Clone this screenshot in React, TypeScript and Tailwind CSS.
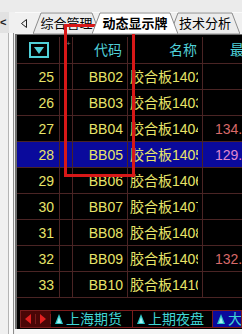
import React from "react"

type Row = { n: number; code: string; name: string; price?: string; active?: boolean }

const rows: Row[] = [
  { n: 25, code: "BB02", name: "胶合板1402" },
  { n: 26, code: "BB03", name: "胶合板1403" },
  { n: 27, code: "BB04", name: "胶合板1404", price: "134.5" },
  { n: 28, code: "BB05", name: "胶合板1405", price: "129.0", active: true },
  { n: 29, code: "BB06", name: "胶合板1406" },
  { n: 30, code: "BB07", name: "胶合板1407" },
  { n: 31, code: "BB08", name: "胶合板1408" },
  { n: 32, code: "BB09", name: "胶合板1409", price: "132.0" },
  { n: 33, code: "BB10", name: "胶合板1410" },
]

const font = { fontFamily: '"Liberation Sans", "Noto Sans CJK SC", sans-serif' }

function Tab({ label, width, active, first }: { label: string; width: number; active?: boolean; first?: boolean }) {
  return (
    <div
      className={`relative flex h-[22px] shrink-0 items-center justify-center ${first ? "" : "-ml-[8px]"} ${active ? "z-10 font-bold" : "z-0"}`}
      style={{ width }}
    >
      <svg className="absolute inset-0" width={width} height={22}>
        <polygon
          points={`0,22 8,1 ${width - 8},1 ${width},22`}
          fill={active ? "#ffffff" : "#ececec"}
          stroke="#8c8c8c"
          strokeWidth={1}
        />
      </svg>
      <span className="relative text-[13px] leading-none text-black">{label}</span>
    </div>
  )
}

function UpTri() {
  return (
    <svg width="8" height="10" viewBox="0 0 8 10" className="shrink-0">
      <polygon points="4,0 8,10 0,10" fill="#30c8c8" />
      <polygon points="4,3 6,9 2,9" fill="#a8f0f0" />
    </svg>
  )
}

export default function App() {
  return (
    <div className="relative flex h-[334px] w-[242px] flex-col overflow-hidden bg-[#f0f0f0]" style={font}>
      <div className="h-[12px] shrink-0 bg-[#ebebeb]" />
      <div className="flex min-h-0 flex-1">
        {/* left strip */}
        <div className="flex w-[15px] shrink-0 flex-col">
          <div className="flex h-[21px] w-[9px] items-center justify-start bg-[#e2e2e2] text-[11px] font-bold leading-none text-[#202020]">
            &lt;
          </div>
          <div className="flex flex-1">
            <div className="w-[9px] border-r border-[#b4b4b4]" />
            <div className="w-[4px] bg-[#fafafa]" />
            <div className="w-[1px] bg-[#8c8c8c]" />
          </div>
        </div>

        {/* main */}
        <div className="flex min-w-0 flex-1 flex-col">
          {/* sheet tabs */}
          <div className="flex h-[22px] shrink-0 items-end border-t border-[#fafafa]">
            <div className="flex h-[22px] w-[18px] shrink-0 items-center justify-center">
              <svg width="6" height="9" viewBox="0 0 6 9">
                <polygon points="5.5,0.5 5.5,8.5 0.5,4.5" fill="none" stroke="#202020" strokeWidth={1} />
              </svg>
            </div>
            <Tab label="综合管理" width={67} first />
            <Tab label="动态显示牌" width={86} active />
            <Tab label="技术分析" width={70} />
          </div>

          {/* black panel */}
          <div className="flex h-[295px] shrink-0 flex-col border-l-2 border-t border-[#6e6e6e] bg-black">
            <div className="flex-1 overflow-hidden whitespace-nowrap text-[14px] leading-none">
              {/* header */}
              <div className="flex h-[29px] border-b border-[#4a2424] pt-[2px] text-[#50d0d8]">
                <div className="flex w-[43px] shrink-0 items-center justify-center border-r border-[#4a2424] pl-[1px]">
                  <div className="flex h-[16px] w-[20px] items-center justify-center border-2 border-[#50d0d8]">
                    <svg width="10" height="7" viewBox="0 0 10 7">
                      <polygon points="0,0 10,0 5,7" fill="#50d0d8" />
                    </svg>
                  </div>
                </div>
                <div className="w-[13px] shrink-0 border-r border-[#4a2424] pl-[6px] pt-[3px] text-[8px] text-[#7a7a7a]">+</div>
                <div className="flex w-[55px] shrink-0 items-center justify-end border-r border-[#4a2424] pr-[5px]">代码</div>
                <div className="flex w-[75px] shrink-0 items-center justify-end border-r border-[#4a2424] pr-[5px]">名称</div>
                <div className="flex min-w-0 flex-1 items-center overflow-hidden pl-[27px]">最新</div>
              </div>

              {rows.map((r) => (
                <div
                  key={r.n}
                  className={`flex h-[26px] border-b border-[#4a2424] text-[#e8e468] ${r.active ? "bg-[#0a0a9c]" : ""}`}
                >
                  <div className="flex w-[43px] shrink-0 items-center justify-end border-r border-[#4a2424] pr-[5px]">{r.n}</div>
                  <div className="w-[13px] shrink-0 border-r border-[#4a2424]" />
                  <div className="flex w-[55px] shrink-0 items-center justify-end border-r border-[#4a2424] pr-[4px]">{r.code}</div>
                  <div className="flex w-[75px] shrink-0 items-center border-r border-[#4a2424] pl-[2px] pr-[4px]">
                    <span className="block w-full overflow-hidden">{r.name}</span>
                  </div>
                  <div
                    className={`flex min-w-0 flex-1 items-center overflow-hidden pl-[12px] ${r.active ? "text-[#e088d0]" : "text-[#d86a6a]"}`}
                  >
                    {r.price}
                  </div>
                </div>
              ))}
            </div>

            {/* bottom exchange tabs */}
            <div className="mb-[1px] ml-[3px] flex h-[18px] shrink-0 items-stretch whitespace-nowrap border border-[#7a1c1c] text-[14px] leading-none text-[#40d4d4]">
              <div className="flex w-[30px] shrink-0 items-center bg-[#4a0606]">
                <div className="flex w-[15px] items-center justify-center border-r border-[#7a1c1c]">
                  <svg width="6" height="10" viewBox="0 0 6 10">
                    <polygon points="6,0 6,10 0,5" fill="#e02020" />
                  </svg>
                </div>
                <div className="flex w-[15px] items-center justify-center border-r border-[#7a1c1c]">
                  <svg width="6" height="10" viewBox="0 0 6 10">
                    <polygon points="0,0 0,10 6,5" fill="#e02020" />
                  </svg>
                </div>
              </div>
              <div className="flex w-[82px] shrink-0 items-center gap-[3px] border-r border-[#7a1c1c] pl-[4px]">
                <UpTri />
                <span>上海期货</span>
              </div>
              <div className="flex w-[80px] shrink-0 items-center gap-[3px] border-r border-[#7a1c1c] pl-[4px]">
                <UpTri />
                <span>上期夜盘</span>
              </div>
              <div className="flex min-w-0 flex-1 items-center gap-[3px] overflow-hidden bg-[#0a0a9c] pl-[4px]">
                <UpTri />
                <span>大商所</span>
              </div>
            </div>
          </div>
          <div className="flex-1 bg-[#f6f6f6]" />
        </div>
      </div>

      {/* red annotation box */}
      <div className="absolute left-[64px] top-[24px] h-[153px] w-[71px] border-[3px] border-[#d81818]" />
    </div>
  )
}
